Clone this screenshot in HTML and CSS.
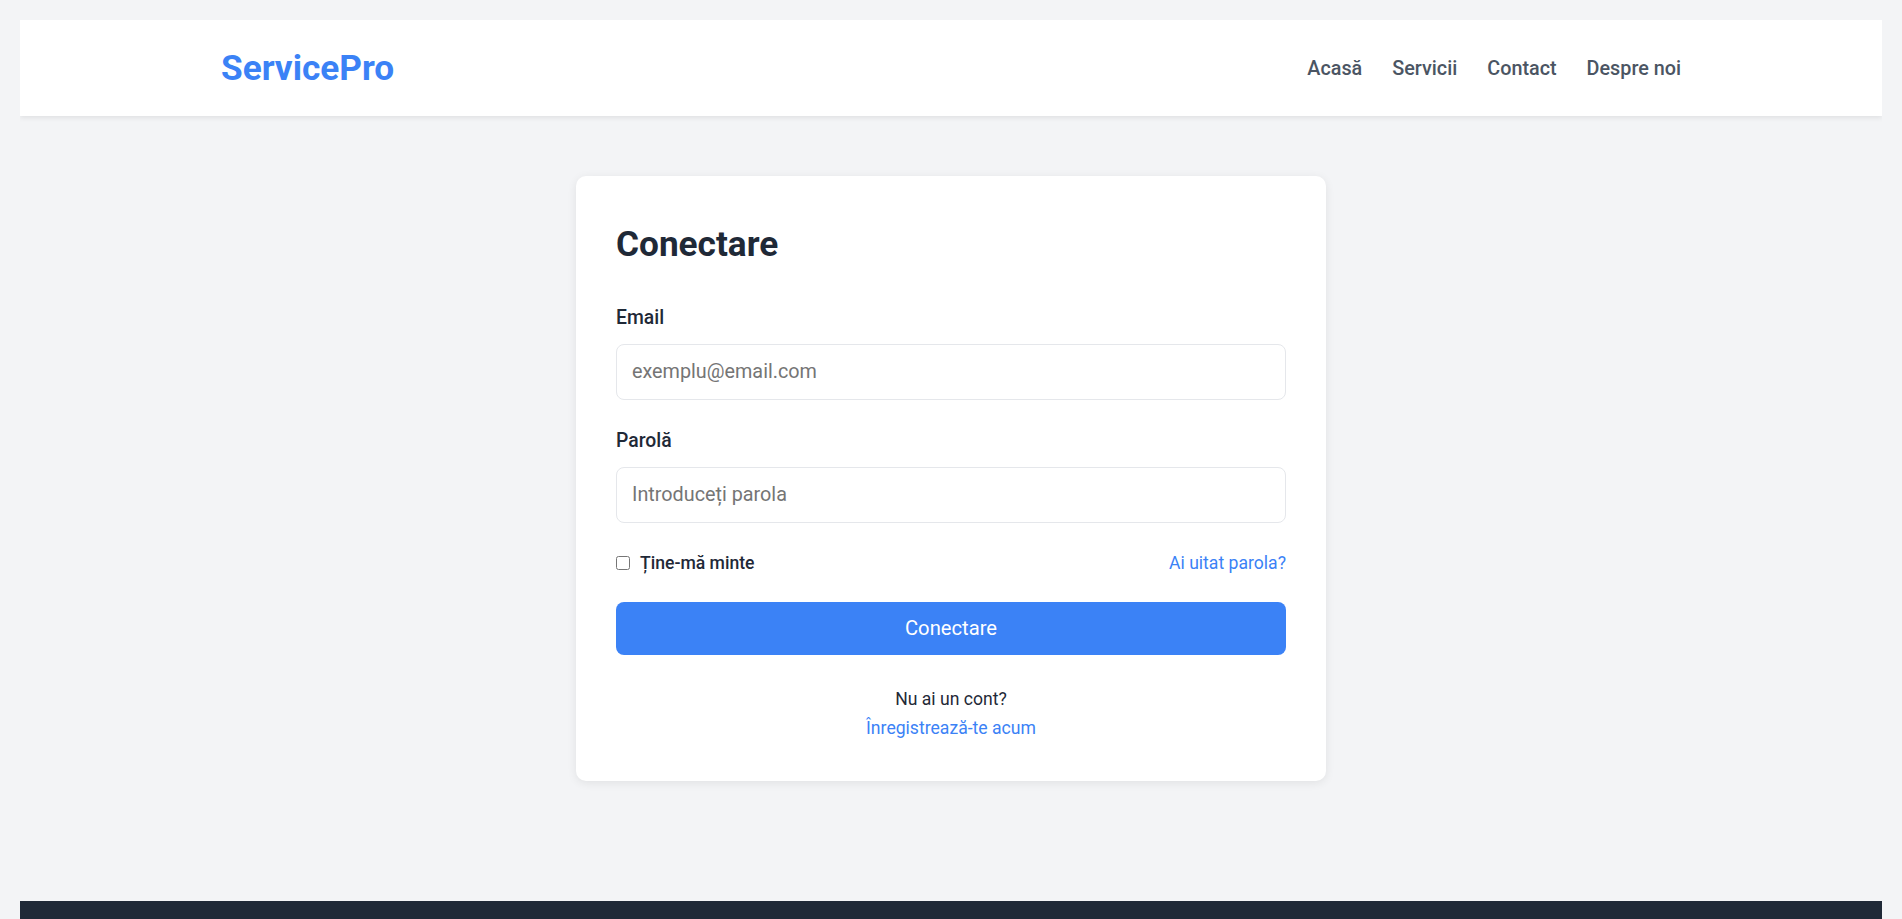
FILE: index.html
```html
<!DOCTYPE html>
<html lang="ro">
<head>
<meta charset="utf-8">
<title>Conectare - ServicePro</title>
<link rel="stylesheet" href="styles.css">
</head>
<body>
<header class="site-header">
  <div class="container header-inner">
    <a class="logo" href="#">ServicePro</a>
    <nav class="nav">
      <a href="#">Acasă</a>
      <a href="#">Servicii</a>
      <a href="#">Contact</a>
      <a href="#">Despre noi</a>
    </nav>
  </div>
</header>
<main class="main">
  <section class="card">
    <h1 class="card-title">Conectare</h1>
    <form class="form">
      <div class="form-group">
        <label class="label" for="email">Email</label>
        <input class="input" id="email" type="email" placeholder="exemplu@email.com">
      </div>
      <div class="form-group">
        <label class="label" for="password">Parolă</label>
        <input class="input" id="password" type="password" placeholder="Introduceți parola">
      </div>
      <div class="form-row">
        <label class="remember"><input type="checkbox" class="checkbox"> Ține-mă minte</label>
        <a href="#" class="link">Ai uitat parola?</a>
      </div>
      <button type="button" class="btn">Conectare</button>
    </form>
    <p class="card-footer">Nu ai un cont?<br><a href="#" class="link">Înregistrează-te acum</a></p>
  </section>
</main>
<footer class="site-footer"></footer>
</body>
</html>
```
FILE: styles.css
```css
* { box-sizing: border-box; }
html, body { background: #f3f4f6; }
body {
  margin: 20px;
  font-family: Roboto, "Liberation Sans", sans-serif;
  font-size: 17.6px;
  line-height: 1.6;
  color: #1f2937;
}
a { text-decoration: none; }
.container {
  max-width: 1500px;
  margin: 0 auto;
  padding: 0 20px;
}
.site-header {
  background: #fff;
  box-shadow: 0 2px 5px rgba(0,0,0,0.08);
  padding: 20px 0;
}
.header-inner {
  display: flex;
  justify-content: space-between;
  align-items: center;
}
.logo {
  color: #3b82f6;
  font-size: 35.2px;
  font-weight: 700;
  line-height: 1.6;
}
.nav {
  display: flex;
  gap: 30px;
  padding-top: 2px;
}
.nav a {
  color: #4b5563;
  font-weight: 500;
  font-size: 19.8px;
}
.main {
  padding: 60px 20px;
  display: flex;
  justify-content: center;
}
.card {
  width: 750px;
  background: #fff;
  border-radius: 10px;
  box-shadow: 0 2px 10px rgba(0,0,0,0.08);
  padding: 40px 40px 38px;
}
.card-title {
  margin: 0 0 30px;
  font-size: 35.2px;
  font-weight: 700;
  line-height: 1.6;
  color: #1f2937;
}
.form-group { margin-bottom: 26px; }
.label {
  display: block;
  font-size: 19.36px;
  font-weight: 500;
  margin-bottom: 10px;
  color: #1f2937;
}
.input {
  display: block;
  width: 100%;
  padding: 15px 15px;
  border: 1px solid #e5e7eb;
  border-radius: 8px;
  font-family: inherit;
  font-size: 19.8px;
  line-height: 24px;
  color: #1f2937;
  background: #fff;
}
.input::placeholder { color: #757575; }
.form-row {
  display: flex;
  justify-content: space-between;
  align-items: center;
  margin-bottom: 25px;
}
.remember {
  display: flex;
  align-items: center;
  gap: 10px;
  font-weight: 500;
  color: #1f2937;
}
.checkbox { margin: 0; width: 14px; height: 14px; }
.link { color: #3b82f6; }
.btn {
  display: block;
  width: 100%;
  padding: 15px;
  border: none;
  border-radius: 8px;
  background: #3b82f6;
  color: #fff;
  font-family: inherit;
  font-size: 20.2px;
  line-height: 23px;
  cursor: pointer;
}
.card-footer {
  margin: 30px 0 0;
  text-align: center;
  line-height: 1.65;
  color: #1f2937;
}
.site-footer {
  margin-top: 60px;
  background: #1f2937;
  height: 160px;
}
```
